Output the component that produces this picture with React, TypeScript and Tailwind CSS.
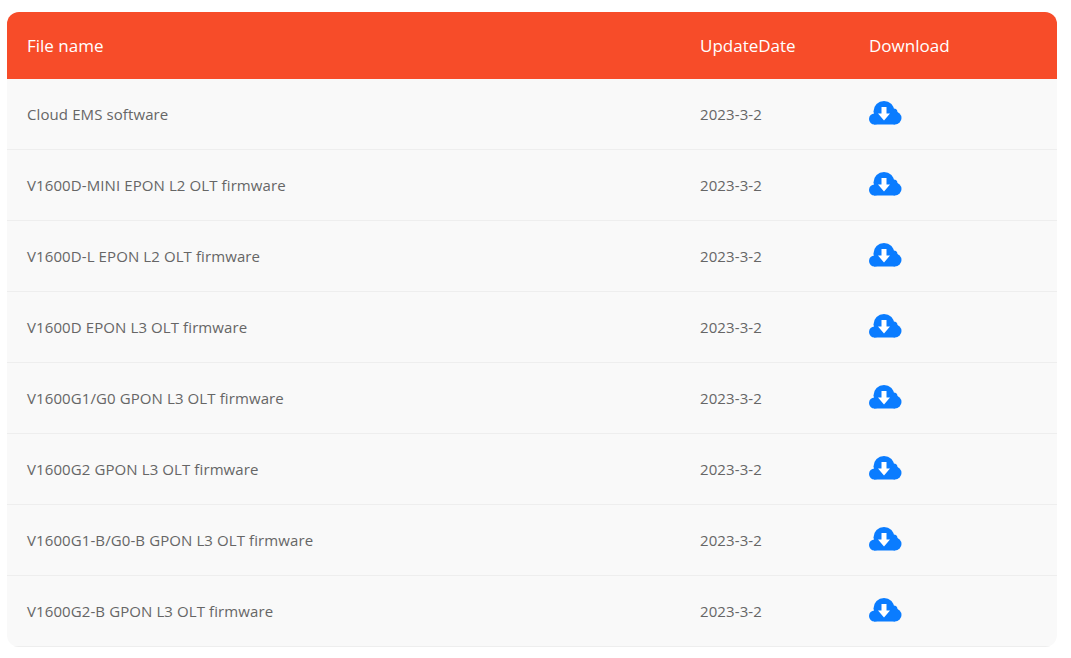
const FILES = [
  "Cloud EMS software",
  "V1600D-MINI EPON L2 OLT firmware",
  "V1600D-L EPON L2 OLT firmware",
  "V1600D EPON L3 OLT firmware",
  "V1600G1/G0 GPON L3 OLT firmware",
  "V1600G2 GPON L3 OLT firmware",
  "V1600G1-B/G0-B GPON L3 OLT firmware",
  "V1600G2-B GPON L3 OLT firmware",
];

function CloudDownload() {
  return (
    <svg width="33" height="24" viewBox="0 0 33 24" fill="#0a7cff" className="-mt-[2px]">
      <circle cx="5.500" cy="18" r="5.500" />
      <circle cx="15" cy="10.500" r="10.500" />
      <circle cx="24.500" cy="11.500" r="4" />
      <circle cx="26" cy="17" r="6.500" />
      <rect x="5" y="15" width="21" height="8.500" />
      <path d="M12.500 6h5v6.500H21L15 19.500 9 12.500h3.500V6Z" fill="#fff" />
    </svg>
  );
}

export default function App() {
  return (
    <div className="h-[658px] bg-white pt-[12px] pl-[7px] font-['Open_Sans','Noto_Sans',sans-serif]">
      <div className="w-[1050px] overflow-hidden rounded-[12px] bg-[#f9f9f9]">
        <div className="grid h-[67px] grid-cols-[673px_169px_1fr] items-center bg-[#f74c29] pl-[20px] text-[17px] text-white">
          <span>File name</span>
          <span>UpdateDate</span>
          <span>Download</span>
        </div>
        {FILES.map((name) => (
          <div
            key={name}
            className="grid h-[71px] grid-cols-[673px_169px_1fr] items-center border-b border-[#eeeeee] pl-[20px] text-[15px] tracking-[0.1px] text-[#666666]"
          >
            <span>{name}</span>
            <span>2023-3-2</span>
            <span className="flex">
              <CloudDownload />
            </span>
          </div>
        ))}
      </div>
    </div>
  );
}
